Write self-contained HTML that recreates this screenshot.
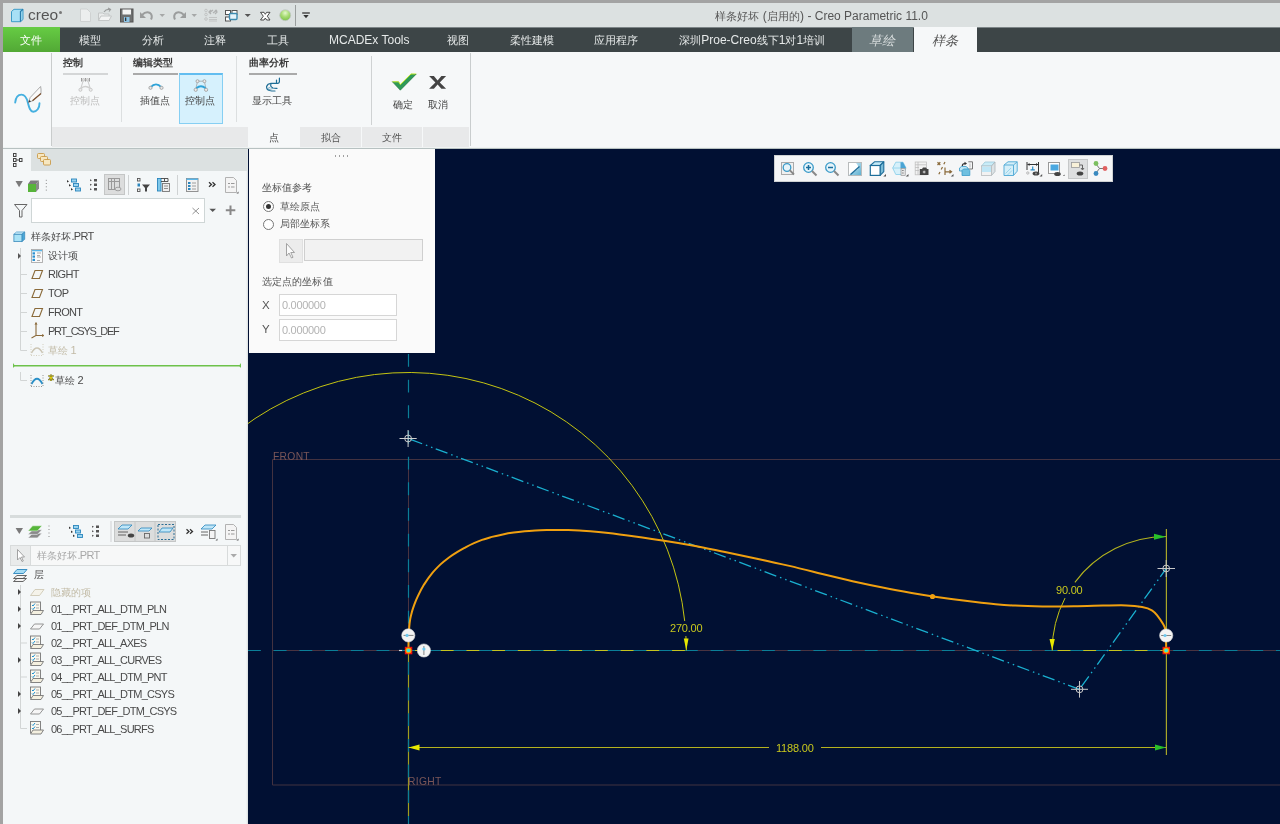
<!DOCTYPE html>
<html><head><meta charset="utf-8">
<style>
*{margin:0;padding:0;box-sizing:border-box}
html,body{width:1280px;height:824px;overflow:hidden;background:#a3a3a3;font-family:"Liberation Sans",sans-serif;font-size:11px;color:#333}
.a{position:absolute}
.t{position:absolute;white-space:nowrap;line-height:1;will-change:transform}
svg{position:absolute;overflow:visible}
#title{left:3px;top:3px;width:1277px;height:24px;background:#dce1e1}
#menu{left:3px;top:27px;width:1277px;height:25px;background:#3d4547}
#ribbon{left:3px;top:52px;width:1277px;height:96px;background:#f6f8f9}
#left{left:3px;top:148px;width:245px;height:676px;background:#f4f7f8}
#canvas{left:248px;top:148px;width:1032px;height:676px;background:#011033;overflow:hidden}
.mt{color:#e6e9e9;font-size:12px;top:34px}
.rl{font-size:11px;color:#3a3a3a;top:57px;font-weight:bold}
.bar{position:absolute;height:2px;top:73px;background:#aaaaaa}
.sep{position:absolute;width:1px;background:#dcdfe0}
.bt{font-size:11px;color:#444;top:95px}
.lt{font-size:11px;color:#4a4a4a;letter-spacing:-0.7px}
.ct{font-size:11px;color:#c8c81e;letter-spacing:-0.2px}
.pt{font-size:11px;color:#555}
.c{font-size:10px;letter-spacing:0.1px}
.mt .c,.ttl .c{font-size:11px}
.tab2{position:absolute;top:127px;height:20px;background:#e8e9ea}
</style></head><body>
<!-- title bar -->
<div id="title" class="a"></div>
<svg style="left:0;top:0" width="320" height="27">
 <!-- creo cube -->
 <path d="M11.5 11.5 L14 9.3 H23 V19.5 L20.5 21.7 H11.5 Z" fill="#a8e0f5" stroke="#3c9cc8" stroke-width="1"/>
 <path d="M20.5 21.7 V11.5 L23 9.3" fill="none" stroke="#2b7fae" stroke-width="1.3"/>
 <!-- new doc -->
 <path d="M80.5 9 H87 L90.5 12.5 V21.5 H80.5 Z" fill="#eceeee" stroke="#cfd2d2"/>
 <!-- open -->
 <path d="M98.5 13 H103 L104 14 H109 V20.5 H98.5 Z" fill="#e9ebeb" stroke="#c4c7c7"/>
 <path d="M98.5 20.5 L101 16 H111.5 L109 20.5 Z" fill="#f3f4f4" stroke="#c4c7c7"/>
 <path d="M104 12 Q106 9 109.5 9.5 M108 8 L110.5 9.5 L109 11.5" fill="none" stroke="#9a9c9c" stroke-width="1.2"/>
 <!-- save -->
 <rect x="120.5" y="9" width="12.5" height="13" fill="#6e7070" stroke="#555"/>
 <rect x="122.5" y="9.5" width="8.5" height="5" fill="#f4f4f4"/>
 <rect x="124" y="17" width="5.5" height="5" fill="#8cc4e6"/>
 <rect x="125" y="17.5" width="1.3" height="3.5" fill="#333"/>
 <!-- undo -->
 <path d="M142 15 Q146 11 150 13 Q153 15.5 151 19.5" fill="none" stroke="#9b9d9d" stroke-width="2"/>
 <path d="M140 12 V18 H146 Z" fill="#9b9d9d"/>
 <path d="M159.5 14 H165 L162.2 17 Z" fill="#a6a8a8"/>
 <!-- redo -->
 <path d="M184 15 Q180 11 176 13 Q173 15.5 175 19.5" fill="none" stroke="#9b9d9d" stroke-width="2"/>
 <path d="M186 12 V18 H180 Z" fill="#9b9d9d"/>
 <path d="M191.5 14 H197 L194.2 17 Z" fill="#a6a8a8"/>
 <!-- regen -->
 <g fill="none" stroke="#c2c4c4" stroke-width="1"><circle cx="206" cy="10.5" r="1.3"/><circle cx="206" cy="14.5" r="1.3"/><circle cx="206" cy="19" r="1.3"/></g>
 <path d="M209 17.5 H217 M209 19.5 H217 M209 21 H217" stroke="#c2c4c4" stroke-width="1"/>
 <path d="M209 13 L213 10 M213 13 L217 10 M211 10 L209 12 L211 14 M215 10 L217 12 L215 14" stroke="#b0b2b2" stroke-width="1.3" fill="none"/>
 <!-- windows -->
 <rect x="225.5" y="10.5" width="5" height="4" fill="#fff" stroke="#555" stroke-width="1"/>
 <rect x="232" y="10.5" width="5" height="4" fill="#fff" stroke="#555" stroke-width="1"/>
 <rect x="225.5" y="17" width="5" height="4" fill="#fff" stroke="#555" stroke-width="1"/>
 <rect x="229.5" y="13.5" width="7.5" height="6" rx="1" fill="#e6f3fa" stroke="#3d8bb0" stroke-width="1.4"/>
 <path d="M244.7 14 H250.8 L247.7 17 Z" fill="#555"/>
 <!-- close -->
 <path d="M260.5 12.3 H264 L265.3 14.3 L266.6 12.3 H270 L267.3 16.2 L270 20 H266.6 L265.3 18 L264 20 H260.5 L263.3 16.2 Z" fill="#fff" stroke="#3a3a3a" stroke-width="0.9" stroke-linejoin="round"/>
 <!-- green ball -->
 <defs><radialGradient id="gb" cx="0.5" cy="0.3" r="0.7"><stop offset="0" stop-color="#e4f8cc"/><stop offset="0.5" stop-color="#a8dc74"/><stop offset="1" stop-color="#7cc248"/></radialGradient></defs>
 <circle cx="285.2" cy="15.2" r="5.5" fill="url(#gb)" stroke="#c2c6c6" stroke-width="0.8"/>
 <rect x="295" y="5" width="1" height="21" fill="#9a9e9e"/>
 <path d="M302.2 13 H309.8" stroke="#333" stroke-width="1.3"/>
 <path d="M303.3 15 H308.7 L306 18.2 Z" fill="#333"/>
</svg>
<div class="t" style="left:28px;top:7px;font-size:15.5px;color:#555;letter-spacing:0px">creo</div>
<div class="a" style="left:59px;top:11px;width:3px;height:3px;border-radius:50%;background:#777"></div>
<div class="t ttl" style="left:715px;top:10px;font-size:12px;color:#555"><span class="c">样条好坏</span> (<span class="c">启用的</span>) - Creo Parametric 11.0</div>

<!-- menu bar -->
<div id="menu" class="a"></div>
<div class="a" style="left:3px;top:27px;width:1277px;height:1px;background:#7d8587"></div>
<div class="a" style="left:3px;top:27px;width:57px;height:25px;background:linear-gradient(#66cc44,#52a835)"></div>
<div class="a" style="left:852px;top:27px;width:61px;height:25px;background:#6d7b7e"></div>
<div class="a" style="left:914px;top:27px;width:63px;height:25px;background:#f6f8f9"></div>
<div class="t mt" style="left:20px;color:#fff"><span class="c">文件</span></div>
<div class="t mt" style="left:79px"><span class="c">模型</span></div>
<div class="t mt" style="left:142px"><span class="c">分析</span></div>
<div class="t mt" style="left:204px"><span class="c">注释</span></div>
<div class="t mt" style="left:267px"><span class="c">工具</span></div>
<div class="t mt" style="left:329px">MCADEx Tools</div>
<div class="t mt" style="left:447px"><span class="c">视图</span></div>
<div class="t mt" style="left:510px"><span class="c">柔性建模</span></div>
<div class="t mt" style="left:594px"><span class="c">应用程序</span></div>
<div class="t mt" style="left:679px"><span class="c">深圳</span>Proe-Creo<span class="c">线下</span>1<span class="c">对</span>1<span class="c">培训</span></div>
<div class="t mt" style="left:869px;top:33.5px;font-style:italic;color:#d8dddd"><span class="c" style="font-size:13px">草绘</span></div>
<div class="t mt" style="left:932px;top:33.5px;font-style:italic;color:#555"><span class="c" style="font-size:13px">样条</span></div>

<!-- ribbon -->
<div id="ribbon" class="a"></div>
<div class="sep" style="left:51px;top:53px;height:93px;background:#c9cccc"></div>
<div class="tab2" style="left:52px;width:196px"></div>
<div class="tab2" style="left:248px;width:51px;background:#f6f8f9"></div>
<div class="tab2" style="left:300px;width:61px"></div>
<div class="tab2" style="left:362px;width:60px"></div>
<div class="tab2" style="left:423px;width:46px"></div>
<div class="sep" style="left:470px;top:53px;height:93px;background:#c9cdce"></div>
<div class="a" style="left:3px;top:147px;width:1277px;height:1px;background:#f0f3f3"></div>

<svg style="left:0;top:0" width="60" height="130">
 <path d="M15.2 102.5 C15.8 97 18.5 94.6 21.4 94.6 C25.5 94.6 27 99 27.9 102.7 C29 107 30 111.7 33.2 111.7 C37 111.7 39.5 108 39.5 103.2" fill="none" stroke="#45b0e0" stroke-width="1.9" stroke-linecap="round"/>
 <path d="M28.3 102.5 L30.2 97.5 L40.6 86.5 L41 89 V93.5 L32.5 100.8 Z" fill="#fafafa" stroke="#888" stroke-width="0.7"/>
 <path d="M32.5 100.8 L41 93.5" stroke="#7a5030" stroke-width="1.3"/>
 <path d="M28.3 102.5 L29.5 100 L31 101.5 Z" fill="#333"/>
</svg>

<div class="t rl" style="left:63px;color:#3f3f3f"><span class="c">控制</span></div>
<div class="bar" style="left:63px;width:45px;background:#d4d6d7"></div>
<div class="t bt" style="left:70px;color:#bcbcbc"><span class="c">控制点</span></div>
<svg style="left:0;top:0" width="1" height="1"></svg>
<div class="sep" style="left:121px;top:57px;height:65px"></div>

<div class="t rl" style="left:133px"><span class="c">编辑类型</span></div>
<div class="bar" style="left:133px;width:45px"></div>
<div class="t bt" style="left:140px"><span class="c">插值点</span></div>
<div class="a" style="left:179px;top:73px;width:44px;height:51px;background:#d6f1fd;border:1px solid #86cff3;border-top:2px solid #62bdf0"></div>
<div class="t bt" style="left:185px"><span class="c">控制点</span></div>

<div class="sep" style="left:236px;top:56px;height:66px"></div>
<div class="t rl" style="left:249px"><span class="c">曲率分析</span></div>
<div class="bar" style="left:249px;width:48px"></div>
<div class="t bt" style="left:252px"><span class="c">显示工具</span></div>

<div class="sep" style="left:371px;top:56px;height:69px;background:#cfd2d3"></div>
<div class="t bt" style="left:393px;top:99px"><span class="c">确定</span></div>
<div class="t bt" style="left:428px;top:99px"><span class="c">取消</span></div>
<div class="t" style="left:269px;top:132px;font-size:11px;color:#444"><span class="c">点</span></div>
<div class="t" style="left:321px;top:132px;font-size:11px;color:#555"><span class="c">拟合</span></div>
<div class="t" style="left:382px;top:132px;font-size:11px;color:#555"><span class="c">文件</span></div>

<!-- ribbon icons -->
<svg style="left:0;top:0" width="470" height="148">
 <!-- disabled control pts icon -->
 <g fill="none" stroke="#c4c4c4" stroke-width="0.9">
  <path d="M80.4 89.8 L83.4 80 H87.6 L90.7 89.8"/>
  <path d="M81.3 88.2 Q85.5 84.8 89.8 88.2" stroke-width="1.6" stroke="#cfcfcf"/>
  <circle cx="80.4" cy="89.8" r="1.5" fill="#eee"/><circle cx="90.7" cy="89.8" r="1.5" fill="#eee"/>
  <path d="M81.5 78 V81.5 M85.5 78 V81.5 M89.5 78 V81.5" stroke="#999" stroke-width="1"/>
  <circle cx="83.5" cy="79.8" r="1.3" fill="#ddd"/><circle cx="87.5" cy="79.8" r="1.3" fill="#ddd"/>
 </g>
 <!-- interp pts icon -->
 <path d="M150.5 87.3 Q156 81.5 161.5 87.3" fill="none" stroke="#2fa3d8" stroke-width="1.9"/>
 <circle cx="150.5" cy="87.8" r="1.6" fill="#e8e8e8" stroke="#999" stroke-width="0.8"/>
 <circle cx="161.5" cy="87.8" r="1.6" fill="#e8e8e8" stroke="#999" stroke-width="0.8"/>
 <!-- control pts icon -->
 <path d="M195.7 89.8 L197.5 81.2 H204.4 L206.1 89.8" fill="none" stroke="#9a9a9a" stroke-width="0.7"/>
 <path d="M196.3 88.2 Q201 84.4 205.6 88.2" fill="none" stroke="#2fa3d8" stroke-width="1.8"/>
 <g fill="#ececec" stroke="#999" stroke-width="0.8"><circle cx="195.7" cy="89.8" r="1.6"/><circle cx="206.1" cy="89.8" r="1.6"/><circle cx="197.5" cy="81.2" r="1.5"/><circle cx="204.4" cy="81.2" r="1.5"/></g>
 <!-- display tool icon -->
 <g fill="none" stroke="#1f6e96" stroke-width="1.2" stroke-linecap="round">
  <path d="M279.4 78.2 V81.8 Q279.2 83.3 277.5 83.4 H271 Q267.5 83.8 266.6 86.5 Q266.3 89.5 269.5 90.5 Q272 91.1 275 91"/>
  <path d="M276.5 80 V82.6"/>
  <path d="M271 83.8 Q269.8 86.8 273 88 Q275 88.4 277 88.3"/>
  <path d="M267.5 88.5 L270 87.5 M268.5 89.8 L272.5 88.6" stroke-width="0.8" stroke="#5a9ab8"/>
 </g>
 <!-- check -->
 <path d="M392.2 81.6 L398.6 81.6 L400.3 84.4 L411 73.8 L416.4 73.9 L400.3 90.2 Z" fill="#2f9a58"/>
 <path d="M392.4 81.8 L398.6 81.8 L400.3 84.6 L411 74 L416.2 74" fill="none" stroke="#c8ec20" stroke-width="0.9"/>
 <path d="M392.2 81.6 L400.3 90.2 L416.4 73.9" fill="none" stroke="#1d6e3a" stroke-width="0.6"/>
 <!-- cancel X -->
 <path d="M429.1 76 H433.9 L437.6 80.6 L441.4 76 H446.1 L439.8 82.4 L446.1 88.8 H441.4 L437.6 84.6 L433.9 88.8 H429.1 L435.4 82.4 Z" fill="#444"/>
</svg>

<!-- left panel -->
<div id="left" class="a"></div>

<div class="a" style="left:31px;top:149px;width:216px;height:22px;background:#dce1e1"></div>
<div class="a" style="left:246px;top:171px;width:1px;height:653px;background:#eef1f2"></div>
<div class="a" style="left:247px;top:149px;width:1px;height:675px;background:#dfe4e5"></div>
<div class="a" style="left:31px;top:198px;width:174px;height:25px;background:#fff;border:1px solid #cfd6d6"></div>
<svg style="left:0;top:0" width="248" height="824">
 <!-- tree tab icon -->
 <g fill="none" stroke="#444" stroke-width="1"><rect x="13.5" y="153.5" width="2.5" height="3"/><rect x="13.5" y="158.5" width="2.5" height="3"/><rect x="13.5" y="163.5" width="2.5" height="3"/><rect x="19.5" y="158.5" width="2.5" height="3"/><path d="M16 160 H19.5"/></g>
 <!-- folders tab icon -->
 <g fill="#f7e7c0" stroke="#c89a4a" stroke-width="0.9"><rect x="37.5" y="153.5" width="7" height="5" rx="1"/><rect x="40.5" y="156.5" width="7" height="5" rx="1"/><rect x="43.5" y="159.5" width="7" height="5.5" rx="1"/></g>
 <!-- toolbar 1 -->
 <path d="M15.5 181 H22.8 L19.1 187.3 Z" fill="#7a7a7a"/>
 <rect x="28" y="184" width="8" height="8" fill="#57b43a"/>
 <path d="M28 184 L30.5 180.5 H39 L36 184 Z" fill="#7c7c7c"/>
 <path d="M36 184 L39 180.5 V188.5 L36 192 Z" fill="#8a8a8a"/>
 <g fill="#8a8a8a"><rect x="45.8" y="179.8" width="1" height="1"/><rect x="45.8" y="183" width="1" height="1"/><rect x="45.8" y="186.3" width="1" height="1"/><rect x="45.8" y="189.6" width="1" height="1"/></g>
 <!-- expand tree -->
 <g fill="#9bd4f0" stroke="#2a86bd" stroke-width="0.9"><rect x="71.5" y="179" width="5" height="3"/><rect x="73.5" y="183.5" width="5" height="3"/><rect x="75.5" y="188" width="5" height="3"/></g>
 <path d="M67 180 L69 181.5 L67 182.5 Z M69 184 L71 185.5 L69 186.5Z M71 188 L73 189.5 L71 190.5Z" fill="#333"/>
 <!-- list expand -->
 <g fill="#555"><rect x="94" y="179" width="3" height="2.5"/><rect x="94" y="183.5" width="3" height="2.5"/><rect x="94" y="188" width="3" height="2.5"/><path d="M90 179.2 L92 180.2 L90 181.2Z M90 183.7 L92 184.7 L90 185.7Z M90 188.2 L92 189.2 L90 190.2Z"/></g>
 <!-- selected btn -->
 <rect x="104.5" y="174.5" width="20" height="20" fill="#dcdddd" stroke="#c4c6c6"/>
 <g fill="none" stroke="#9a9a9a" stroke-width="1"><rect x="108.5" y="178.5" width="11" height="11"/><path d="M111.5 178.5 V189.5 M114.5 178.5 V189.5 M108.5 181.5 H119.5"/></g>
 <ellipse cx="118" cy="189" rx="3" ry="1.8" fill="#dcdddd" stroke="#9a9a9a" stroke-width="0.9"/>
 <rect x="128" y="175" width="1" height="20" fill="#cfd2d3"/>
 <!-- tree filter -->
 <g fill="none" stroke="#555" stroke-width="0.9"><rect x="137.5" y="178.5" width="2.5" height="2.5"/><rect x="137.5" y="189" width="2.5" height="2.5"/></g>
 <rect x="137.5" y="183.5" width="2.5" height="3" fill="#2a86bd"/>
 <path d="M142 184.5 H150 L147 188 V191.5 H145 V188 Z" fill="#444"/>
 <!-- table icon -->
 <rect x="157.5" y="178.5" width="3.5" height="12.5" fill="#7fc8ea" stroke="#2a86bd" stroke-width="0.9"/>
 <path d="M161 178.5 H168 V181.5 H161 M164.5 178.5 V181.5" fill="none" stroke="#444" stroke-width="0.9"/>
 <rect x="162.5" y="183.5" width="7" height="8" fill="#eee" stroke="#777" stroke-width="0.9"/>
 <path d="M164 186 H168 M164 188.5 H168" stroke="#777" stroke-width="0.8"/>
 <rect x="177" y="175" width="1" height="20" fill="#cfd2d3"/>
 <!-- list icon -->
 <rect x="186.5" y="178.5" width="11.5" height="13" fill="#f2f2f2" stroke="#888" stroke-width="0.9"/>
 <rect x="186.5" y="178.5" width="11.5" height="1.5" fill="#5ab6e8"/>
 <g fill="#2a86bd"><rect x="188" y="182" width="2.5" height="2"/><rect x="188" y="185" width="2.5" height="2"/><rect x="188" y="188" width="2.5" height="2"/></g>
 <path d="M192 183 H196 M192 186 H196 M192 189 H196" stroke="#888" stroke-width="0.8"/>
 <path d="M209 182.3 L211.5 184.5 L209 186.8 M212.5 182.3 L215 184.5 L212.5 186.8" fill="none" stroke="#333" stroke-width="1.3"/>
 <!-- doc icon -->
 <path d="M225.5 177.5 H233.5 L236.5 180.5 V192.5 H225.5 Z" fill="#f4f4f4" stroke="#aaa" stroke-width="0.9"/>
 <path d="M228 183.5 H230 M231 183.5 H234.5 M228 187 H230 M231 187 H234.5" stroke="#999" stroke-width="1"/>
 <path d="M236.5 193.5 L238.5 191.5 V193.5Z" fill="#555"/>
 <!-- funnel -->
 <path d="M14.5 204.5 H27 L22 210.5 V217 H19.5 V210.5 Z" fill="none" stroke="#666" stroke-width="1"/>
 <!-- search clear x, dropdown, plus -->
 <path d="M192.5 208 L199 214 M199 208 L192.5 214" stroke="#888" stroke-width="0.9"/>
 <path d="M209.4 208.7 H216 L212.7 212 Z" fill="#555"/>
 <path d="M230.5 205.5 V215 M225.8 210.2 H235.3" stroke="#888" stroke-width="2"/>
 <!-- model icon -->
 <path d="M13.9 234.3 L16.5 232 H24.7 L21.9 234.3 Z" fill="#d4f2fc" stroke="#4a9ccc" stroke-width="0.8"/>
 <path d="M21.9 234.3 L24.7 232 V239.3 L21.9 241.6 Z" fill="#4aa8d8" stroke="#3c8cbc" stroke-width="0.8"/>
 <rect x="13.9" y="234.3" width="8" height="7.3" fill="#a8e2f6" stroke="#3c8cbc" stroke-width="0.8"/>
 <!-- tree lines -->
 <path d="M20.5 248 V350.5 H27 M20.5 274.5 H27 M20.5 293.5 H27 M20.5 312.5 H27 M20.5 331.5 H27" fill="none" stroke="#d2d5d5" stroke-width="1"/>
 <path d="M20.5 372 V380.5 H27" fill="none" stroke="#d2d5d5" stroke-width="1"/>
 <path d="M18 253 L21 256 L18 259 Z" fill="#555"/>
 <!-- design items icon -->
 <rect x="31.5" y="249.5" width="11" height="13" fill="#fafafa" stroke="#aaa" stroke-width="0.9"/>
 <rect x="32" y="250" width="10" height="1.3" fill="#5ab6e8"/>
 <g fill="#2a90d0"><rect x="32.5" y="252.3" width="2.5" height="2.2"/><rect x="32.5" y="255.5" width="2.5" height="2.2"/><rect x="32.5" y="258.8" width="2.5" height="2.2"/></g>
 <path d="M37 253 H41 M37 255.5 H40 M37 257 H41 M37 260.5 H40" stroke="#888" stroke-width="0.7"/>
 <!-- datum planes -->
 <g fill="none" stroke="#8a6a3a" stroke-width="1.1"><path d="M32 278.5 L35 270.5 H42.5 L39.5 278.5 Z"/><path d="M32 297.5 L35 289.5 H42.5 L39.5 297.5 Z"/><path d="M32 316.5 L35 308.5 H42.5 L39.5 316.5 Z"/></g>
 <!-- csys -->
 <path d="M36 323.5 V335.5 L31.5 338 M36 335.5 H43" fill="none" stroke="#8a6a3a" stroke-width="1.1"/>
 <path d="M35 324.5 L36 322.5 L37 324.5 M42 334.5 L44 335.5 L42 336.5" fill="#8a6a3a" stroke="#8a6a3a" stroke-width="0.8"/>
 <!-- sketch1 icon disabled -->
 <path d="M31.5 353 Q37 343 42.5 353" fill="none" stroke="#cbc5b4" stroke-width="1.5"/>
 <path d="M31 355.5 H43 M31 344 V355 M43 344 V355" stroke="#cfc9b9" stroke-width="0.9" stroke-dasharray="1 1.5"/>
 <!-- green line -->
 <rect x="13" y="365" width="228" height="1.5" fill="#6dc24b"/>
 <path d="M13 363 V368 L15 365.7Z M241 363 V368 L239 365.7Z" fill="#6dc24b"/>
 <!-- sketch2 icon -->
 <path d="M31.5 384 Q37 373.5 42.5 384" fill="none" stroke="#2a90c8" stroke-width="1.8"/>
 <path d="M31 386.5 H43 M31 375 V386 M43 375 V386" stroke="#888" stroke-width="0.9" stroke-dasharray="1 1.5"/>
 <path d="M48.5 380 L53.5 375.5 M48.5 375.5 L53.5 380 M51 374.5 V381" stroke="#444" stroke-width="1.6"/>
 <path d="M48.5 380 L53.5 375.5 M48.5 375.5 L53.5 380 M51 374.5 V381" stroke="#f0e000" stroke-width="0.9"/>
 <!-- divider -->
 <rect x="10" y="515" width="231" height="3" fill="#d7dcdc"/>
 <!-- toolbar 2 -->
 <path d="M15.6 528 H23 L19.3 534 Z" fill="#7a7a7a"/>
 <path d="M28 537.9 L32.6 533.2 H42 L37.4 537.9 Z" fill="#8a8a8a" stroke="#f4f7f8" stroke-width="0.6"/>
 <path d="M28 534.4 L32.6 529.7 H42 L37.4 534.4 Z" fill="#8a8a8a" stroke="#f4f7f8" stroke-width="0.6"/>
 <path d="M28 530.9 L32.6 525.8 H42 L37.4 530.9 Z" fill="#56b63a" stroke="#f4f7f8" stroke-width="0.5"/>
 <g fill="#8a8a8a"><rect x="48.5" y="525.5" width="1" height="1"/><rect x="48.5" y="529" width="1" height="1"/><rect x="48.5" y="532.5" width="1" height="1"/><rect x="48.5" y="536" width="1" height="1"/></g>
 <g fill="#9bd4f0" stroke="#2a86bd" stroke-width="0.9"><rect x="73.5" y="525.5" width="5" height="3"/><rect x="75.5" y="530" width="5" height="3"/><rect x="77.5" y="534.5" width="5" height="3"/></g>
 <path d="M69 526.5 L71 528 L69 529 Z M71 530.5 L73 532 L71 533Z M73 534.5 L75 536 L73 537Z" fill="#333"/>
 <g fill="#555"><rect x="96" y="525.5" width="3" height="2.5"/><rect x="96" y="530" width="3" height="2.5"/><rect x="96" y="534.5" width="3" height="2.5"/><path d="M92 525.7 L94 526.7 L92 527.7Z M92 530.2 L94 531.2 L92 532.2Z M92 534.7 L94 535.7 L92 536.7Z"/></g>
 <rect x="110.5" y="521" width="1" height="21" fill="#cfd2d3"/>
 <rect x="114.5" y="521.5" width="61" height="20" fill="#dcdddd" stroke="#c4c6c6"/>
 <path d="M135 521.5 V541.5 M155 521.5 V541.5" stroke="#c4c6c6"/>
 <!-- layer btn icons -->
 <path d="M118 529 L122 525 H132 L128 529 Z" fill="#bfe6f8" stroke="#2a86bd" stroke-width="0.8"/>
 <path d="M118 532 H128 M118 535 H126" stroke="#555" stroke-width="0.9"/>
 <ellipse cx="131" cy="535.5" rx="3.2" ry="2" fill="#444"/>
 <path d="M138 531 L141 528 H152 L149 531 Z" fill="#bfe6f8" stroke="#2a86bd" stroke-width="0.8"/>
 <rect x="144.5" y="533.5" width="5" height="4.5" fill="none" stroke="#666" stroke-width="0.9"/>
 <path d="M159 532 L162 528 H173 L170 532 Z" fill="#bfe6f8" stroke="#2a86bd" stroke-width="0.8"/>
 <rect x="158" y="524.5" width="16" height="15" fill="none" stroke="#2a6d94" stroke-width="1" stroke-dasharray="2 1.5"/>
 <path d="M186.5 529.3 L189 531.5 L186.5 533.8 M190 529.3 L192.5 531.5 L190 533.8" fill="none" stroke="#333" stroke-width="1.3"/>
 <path d="M201 529 L205 525 H216 L212 529 Z" fill="#bfe6f8" stroke="#2a86bd" stroke-width="0.8"/>
 <path d="M201 532 H208 M201 535 H208" stroke="#555" stroke-width="0.9"/>
 <rect x="209.5" y="530.5" width="5.5" height="8" fill="#f4f4f4" stroke="#777" stroke-width="0.9"/>
 <path d="M215.5 540.5 L217.5 538.5 V540.5Z" fill="#555"/>
 <path d="M225.5 524.5 H233.5 L236.5 527.5 V539.5 H225.5 Z" fill="#f4f4f4" stroke="#aaa" stroke-width="0.9"/>
 <path d="M228 530.5 H230 M231 530.5 H234.5 M228 534 H230 M231 534 H234.5" stroke="#999" stroke-width="1"/>
 <path d="M236.5 540.5 L238.5 538.5 V540.5Z" fill="#555"/>
 <!-- layer dropdown -->
 <rect x="10.5" y="545.5" width="230" height="20" fill="#f7f8f8" stroke="#d8dbdb"/>
 <rect x="11" y="546" width="19.5" height="19" fill="#e9ebeb"/>
 <path d="M30.5 546 V565" stroke="#d8dbdb"/>
 <path d="M227.5 546 V565" stroke="#d8dbdb"/>
 <path d="M17.5 549.5 V560 L20 557.5 L22 561.5 L23.3 561 L21.5 557 H24.5 Z" fill="#fff" stroke="#999" stroke-width="0.9"/>
 <path d="M230.5 554 H237 L233.7 557.5 Z" fill="#aaa"/>
 <!-- layers icon -->
 <path d="M13.5 578.5 L17 575.5 H26.5 L23 578.5 Z M13.5 581.5 L17 578.5 H26.5 L23 581.5 Z" fill="#f4f4f4" stroke="#555" stroke-width="0.9"/>
 <path d="M13.5 573.5 L17 569.5 H27 L23.5 573.5 Z" fill="#a6dcf4" stroke="#2a86bd" stroke-width="0.9"/>
 <!-- layer tree lines -->
 <path d="M20.5 585 V728.5 H27 M20.5 643 H27 M20.5 677 H27" fill="none" stroke="#d2d5d5" stroke-width="1"/>
 <g fill="#444"><path d="M18 589 L21 592 L18 595Z"/><path d="M18 606 L21 609 L18 612Z"/><path d="M18 623 L21 626 L18 629Z"/><path d="M18 657 L21 660 L18 663Z"/><path d="M18 691 L21 694 L18 697Z"/><path d="M18 708 L21 711 L18 714Z"/></g>
 <!-- hidden items plane -->
 <path d="M30.5 595.5 L35 589.5 H44 L39.5 595.5 Z" fill="#f5f3ea" stroke="#cfc9b6" stroke-width="0.9"/>
</svg>
<div class="t lt" style="left:31px;top:231px"><span class="c">样条好坏</span>.PRT</div>
<div class="t lt" style="left:48px;top:250px"><span class="c">设计项</span></div>
<div class="t lt" style="left:48px;top:269px">RIGHT</div>
<div class="t lt" style="left:48px;top:288px">TOP</div>
<div class="t lt" style="left:48px;top:307px">FRONT</div>
<div class="t lt" style="left:48px;top:326px;letter-spacing:-1.3px">PRT_CSYS_DEF</div>
<div class="t lt" style="left:48px;top:345px;color:#c2bba6"><span class="c">草绘</span> 1</div>
<div class="t lt" style="left:55px;top:375px"><span class="c">草绘</span> 2</div>
<div class="t lt" style="left:37px;top:550px;color:#a8a8a8"><span class="c">样条好坏</span>.PRT</div>
<div class="t lt" style="left:34px;top:569px"><span class="c">层</span></div>
<div class="t lt" style="left:51px;top:587px;color:#c2bba6"><span class="c">隐藏的项</span></div>
<div class="t lt" style="left:51px;top:604.0px;letter-spacing:-0.75px">01__PRT_ALL_DTM_PLN</div>
<div class="t lt" style="left:51px;top:621.0px;letter-spacing:-0.75px">01__PRT_DEF_DTM_PLN</div>
<div class="t lt" style="left:51px;top:638.0px;letter-spacing:-0.75px">02__PRT_ALL_AXES</div>
<div class="t lt" style="left:51px;top:655.0px;letter-spacing:-0.75px">03__PRT_ALL_CURVES</div>
<div class="t lt" style="left:51px;top:672.0px;letter-spacing:-0.75px">04__PRT_ALL_DTM_PNT</div>
<div class="t lt" style="left:51px;top:689.0px;letter-spacing:-0.75px">05__PRT_ALL_DTM_CSYS</div>
<div class="t lt" style="left:51px;top:706.0px;letter-spacing:-0.75px">05__PRT_DEF_DTM_CSYS</div>
<div class="t lt" style="left:51px;top:723.5px;letter-spacing:-0.75px">06__PRT_ALL_SURFS</div>
<svg style="left:0;top:0" width="248" height="824"><rect x="30.5" y="602.0" width="10" height="11" fill="#fbf8ee" stroke="#777" stroke-width="0.9"/><path d="M30.5 614.5 L33 610.5 H43.5 L41 614.5 Z" fill="#f4f0e0" stroke="#777" stroke-width="0.9"/><path d="M32 605.0 L33 606.0 L35 603.5 M32 608.5 L33 609.5 L35 607.0" fill="none" stroke="#1d8fd0" stroke-width="1"/><path d="M36 605.0 H39 M36 608.0 H39" stroke="#999" stroke-width="0.8"/>
<path d="M30.5 629.0 L34.5 624.0 H43.5 L39.5 629.0 Z" fill="#f6f6f6" stroke="#8a8a8a" stroke-width="0.9"/>
<rect x="30.5" y="636.0" width="10" height="11" fill="#fbf8ee" stroke="#777" stroke-width="0.9"/><path d="M30.5 648.5 L33 644.5 H43.5 L41 648.5 Z" fill="#f4f0e0" stroke="#777" stroke-width="0.9"/><path d="M32 639.0 L33 640.0 L35 637.5 M32 642.5 L33 643.5 L35 641.0" fill="none" stroke="#1d8fd0" stroke-width="1"/><path d="M36 639.0 H39 M36 642.0 H39" stroke="#999" stroke-width="0.8"/>
<rect x="30.5" y="653.0" width="10" height="11" fill="#fbf8ee" stroke="#777" stroke-width="0.9"/><path d="M30.5 665.5 L33 661.5 H43.5 L41 665.5 Z" fill="#f4f0e0" stroke="#777" stroke-width="0.9"/><path d="M32 656.0 L33 657.0 L35 654.5 M32 659.5 L33 660.5 L35 658.0" fill="none" stroke="#1d8fd0" stroke-width="1"/><path d="M36 656.0 H39 M36 659.0 H39" stroke="#999" stroke-width="0.8"/>
<rect x="30.5" y="670.0" width="10" height="11" fill="#fbf8ee" stroke="#777" stroke-width="0.9"/><path d="M30.5 682.5 L33 678.5 H43.5 L41 682.5 Z" fill="#f4f0e0" stroke="#777" stroke-width="0.9"/><path d="M32 673.0 L33 674.0 L35 671.5 M32 676.5 L33 677.5 L35 675.0" fill="none" stroke="#1d8fd0" stroke-width="1"/><path d="M36 673.0 H39 M36 676.0 H39" stroke="#999" stroke-width="0.8"/>
<rect x="30.5" y="687.0" width="10" height="11" fill="#fbf8ee" stroke="#777" stroke-width="0.9"/><path d="M30.5 699.5 L33 695.5 H43.5 L41 699.5 Z" fill="#f4f0e0" stroke="#777" stroke-width="0.9"/><path d="M32 690.0 L33 691.0 L35 688.5 M32 693.5 L33 694.5 L35 692.0" fill="none" stroke="#1d8fd0" stroke-width="1"/><path d="M36 690.0 H39 M36 693.0 H39" stroke="#999" stroke-width="0.8"/>
<path d="M30.5 714.0 L34.5 709.0 H43.5 L39.5 714.0 Z" fill="#f6f6f6" stroke="#8a8a8a" stroke-width="0.9"/>
<rect x="30.5" y="721.5" width="10" height="11" fill="#fbf8ee" stroke="#777" stroke-width="0.9"/><path d="M30.5 734.0 L33 730.0 H43.5 L41 734.0 Z" fill="#f4f0e0" stroke="#777" stroke-width="0.9"/><path d="M32 724.5 L33 725.5 L35 723.0 M32 728.0 L33 729.0 L35 726.5" fill="none" stroke="#1d8fd0" stroke-width="1"/><path d="M36 724.5 H39 M36 727.5 H39" stroke="#999" stroke-width="0.8"/>
</svg>

<!-- canvas -->
<div id="canvas" class="a"></div>
<svg style="left:248px;top:148px" width="1032" height="676" viewBox="248 148 1032 676">
 <defs><clipPath id="cc"><rect x="248" y="148" width="1032" height="676"/></clipPath></defs>
 <g clip-path="url(#cc)" fill="none">
 <!-- FRONT datum rectangle + plane edges -->
 <path d="M1290 459.5 H272.5 V785 H1290" stroke="#433240" stroke-width="1"/>
 <path d="M272.5 650.5 H1290" stroke="#4a3340" stroke-width="1"/>
 <path d="M408.5 459.5 V785" stroke="#4a3340" stroke-width="1"/>
 <!-- yellow extension lines -->
 <path d="M408.3 650.5 H686.3 M1052.2 650.5 H1166.2" stroke="#c6c31e" stroke-width="1.2"/>
 <path d="M408.5 650.5 V816" stroke="#a29e1e" stroke-width="1.2"/>
 <path d="M399 650.5 H402.5" stroke="#e0e0e0" stroke-width="1.2"/>
 <path d="M1166.4 529 V755" stroke="#a8a628" stroke-width="1.2"/>
 <!-- centerlines -->
 <path d="M248 650.5 H1290" stroke="#0b7f98" stroke-width="1.2" stroke-dasharray="12.85 12.85"/>
 <path d="M408.5 123.1 V830" stroke="#0b7f98" stroke-width="1.2" stroke-dasharray="12.83 12.83"/>
 <!-- big arc 270 -->
 <path d="M240.0 429.2 A278 278 0 0 1 684.7 621.0" stroke="#c4c412" stroke-width="1"/>
 <path d="M685.9 636.0 A278 278 0 0 1 686.3 650.5" stroke="#c4c412" stroke-width="1"/>
 <path d="M686.3 650.5 L683.8 638.5 L688.5 638.5 Z" fill="#e8e800" stroke="none"/>
 <!-- 90 arc -->
 <path d="M1166.2 536.5 A114 114 0 0 0 1074.9 582.3" stroke="#b4b41e" stroke-width="1.1"/>
 <path d="M1065.0 598.1 A114 114 0 0 0 1052.2 650.5" stroke="#c4c412" stroke-width="1"/>
 <path d="M1052.2 650.5 L1049.5 639 L1054.8 639 Z" fill="#e8e800" stroke="none"/>
 <path d="M1166 536.8 L1154 533.8 L1154 539.8 Z" fill="#28c02a" stroke="none"/>
 <!-- 1188 dim -->
 <path d="M408.5 747.5 H769 M821 747.5 H1166" stroke="#b5b21e" stroke-width="1.2"/>
 <path d="M408.5 747.5 L419.5 744.5 V750.5 Z" fill="#e8e800" stroke="none"/>
 <path d="M1166 747.5 L1155 744.5 V750.5 Z" fill="#28c02a" stroke="none"/>
 <!-- control polygon -->
 <path d="M408.1 438.5 L1079.5 689.3" stroke="#1ab0d0" stroke-width="1.3" stroke-dasharray="12.5 4 1.5 4 1.5 3.5" stroke-dashoffset="24.5"/>
 <path d="M1079.5 689.3 L1166.2 568.5" stroke="#1ab0d0" stroke-width="1.3" stroke-dasharray="12.5 4 1.5 4 1.5 3.5" stroke-dashoffset="23.5"/>
 <!-- spline -->
 <path d="M408.4 650.5 C408.4 648.8 408.5 644.0 408.6 640.0 C408.8 636.0 409.0 629.9 409.3 626.4 C409.6 622.9 409.8 621.5 410.2 619.1 C410.6 616.7 411.3 614.3 411.9 611.9 C412.6 609.5 413.3 607.3 414.3 604.6 C415.3 601.9 416.4 599.2 418.0 595.9 C419.6 592.6 421.7 588.4 424.0 584.6 C426.4 580.9 429.3 576.7 432.0 573.4 C434.7 570.0 437.7 567.1 440.5 564.4 C443.3 561.8 446.2 559.6 449.0 557.5 C451.8 555.4 454.7 553.6 457.5 551.9 C460.3 550.2 463.3 548.6 466.0 547.1 C468.7 545.6 471.3 544.3 474.0 543.1 C476.7 541.9 479.1 540.9 482.0 539.9 C485.0 538.8 488.4 537.9 491.9 536.9 C495.3 536.0 499.2 535.1 502.8 534.4 C506.4 533.7 510.1 533.1 513.7 532.6 C517.4 532.1 521.0 531.7 524.7 531.3 C528.3 530.9 532.0 530.7 535.6 530.5 C539.3 530.2 542.9 530.1 546.6 530.0 C550.2 529.9 553.9 529.9 557.5 529.9 C561.1 529.9 564.8 530.0 568.4 530.1 C572.1 530.2 575.7 530.4 579.4 530.5 C583.0 530.7 585.9 530.9 590.3 531.2 C594.7 531.6 599.1 532.0 606.0 532.8 C612.9 533.6 622.1 534.7 631.5 536.0 C641.0 537.3 652.1 538.8 662.5 540.5 C672.9 542.1 683.3 543.8 693.8 545.7 C704.2 547.6 714.5 549.8 725.0 551.9 C735.5 554.1 746.1 556.3 756.9 558.7 C767.6 561.0 778.6 563.4 789.4 565.9 C800.1 568.4 810.7 571.1 821.2 573.7 C831.8 576.2 842.1 578.8 852.5 581.2 C862.9 583.5 873.9 585.8 883.8 587.7 C893.6 589.7 903.6 591.5 911.6 592.9 C919.5 594.3 924.9 595.2 931.6 596.2 C938.2 597.2 943.9 598.0 951.2 599.0 C958.6 600.0 968.1 601.2 975.5 602.1 C982.9 603.0 989.0 603.7 995.6 604.3 C1002.2 604.9 1007.3 605.3 1015.1 605.6 C1023.0 606.0 1032.7 606.3 1042.5 606.5 C1052.3 606.6 1063.7 606.5 1073.8 606.3 C1083.8 606.2 1094.3 605.8 1103.0 605.6 C1111.8 605.4 1119.9 605.2 1126.5 605.4 C1133.0 605.6 1137.8 606.2 1142.1 607.0 C1146.3 607.8 1149.2 608.7 1151.9 610.3 C1154.6 611.9 1156.3 614.4 1158.1 616.6 C1159.9 618.8 1161.6 621.5 1162.8 623.6 C1164.0 625.7 1164.7 626.3 1165.2 629.0 C1165.7 631.7 1165.8 636.4 1166.0 640.0 C1166.2 643.6 1166.2 648.8 1166.2 650.5" stroke="#f0a010" stroke-width="2"/>
 <circle cx="932.5" cy="596.5" r="2.6" fill="#f0a010" stroke="none"/>
 </g>
 <!-- control point markers -->
 <g stroke="#c8c8c8" stroke-width="1" fill="none">
  <circle cx="408.1" cy="438.5" r="3.4"/><path d="M399.5 438.5 H416.7 M408.1 430 V447" stroke="#d0d0d0"/>
  <circle cx="1079.5" cy="689.3" r="3.4"/><path d="M1071 689.3 H1088 M1079.5 681 V697.6"/>
  <circle cx="1166.2" cy="568.5" r="3.4"/><path d="M1157.5 568.5 H1175 M1166.2 560 V577"/>
 </g>
 <!-- end markers -->
 <rect x="404.8" y="646.8" width="7.5" height="7.5" fill="#f01010"/>
 <circle cx="408.5" cy="650.5" r="3" fill="#f5a800"/><circle cx="408.5" cy="650.5" r="1.8" fill="#30e8e8"/>
 <rect x="1162.5" y="646.8" width="7.5" height="7.5" fill="#f01010"/>
 <circle cx="1166.2" cy="650.5" r="3" fill="#f5a800"/><circle cx="1166.2" cy="650.5" r="1.8" fill="#30e8e8"/>
 <g fill="#f3f3f3" stroke="#d8d8d8" stroke-width="0.6">
  <circle cx="408.3" cy="635.4" r="6.6"/><circle cx="423.9" cy="650.5" r="6.6"/><circle cx="1166.2" cy="635.5" r="6.6"/>
 </g>
 <g stroke="#777" stroke-width="0.9"><path d="M403.5 635.4 H413.5 M1161.2 635.5 H1171.2 M423.9 646 V655"/></g>
 <g fill="#6cc8ee"><circle cx="407" cy="635.4" r="1.6"/><circle cx="1165" cy="635.5" r="1.6"/><circle cx="423.9" cy="649" r="1.6"/></g>
</svg>
<div class="t ct" style="left:272.5px;top:451.5px;color:#7a5658;font-size:10.3px;letter-spacing:0.3px">FRONT</div>
<div class="t ct" style="left:408px;top:777px;color:#7a5658;font-size:10.3px;letter-spacing:0.3px">RIGHT</div>
<div class="t ct" style="left:669.5px;top:622.5px">270.00</div>
<div class="t ct" style="left:1055.5px;top:585px">90.00</div>
<div class="t ct" style="left:776px;top:742.5px">1188.00</div>

<!-- floating point panel -->
<div class="a" style="left:249px;top:149px;width:186px;height:204px;background:#fafafa"></div>
<div class="a" style="left:335px;top:155px;width:15px;height:2px;background:repeating-linear-gradient(90deg,#a0a0a0 0 1.5px,transparent 1.5px 4px)"></div>
<div class="t pt" style="left:262px;top:182px"><span class="c">坐标值参考</span></div>
<div class="a" style="left:263px;top:201px;width:11px;height:11px;border-radius:50%;border:1px solid #777;background:#fff"></div>
<div class="a" style="left:266px;top:204px;width:5px;height:5px;border-radius:50%;background:#333"></div>
<div class="t pt" style="left:280px;top:200.5px"><span class="c">草绘原点</span></div>
<div class="a" style="left:263px;top:219px;width:11px;height:11px;border-radius:50%;border:1px solid #777;background:#fff"></div>
<div class="t pt" style="left:280px;top:218px"><span class="c">局部坐标系</span></div>
<div class="a" style="left:279px;top:239px;width:24px;height:24px;background:#ececec;border:1px solid #e0e0e0"></div>
<svg style="left:0;top:0" width="440" height="360"><path d="M286.5 243.5 V256 L289 253 L291.5 258 L293 257.3 L290.8 252.5 H294.5 Z" fill="#fafafa" stroke="#9a9a9a" stroke-width="0.9"/></svg>
<div class="a" style="left:304px;top:239px;width:119px;height:22px;background:#f2f2f2;border:1px solid #cfcfcf"></div>
<div class="t pt" style="left:262px;top:276px"><span class="c">选定点的坐标值</span></div>
<div class="t pt" style="left:262px;top:300px;font-size:11.5px">X</div>
<div class="t pt" style="left:262px;top:324px;font-size:11.5px">Y</div>
<div class="a" style="left:279px;top:294px;width:118px;height:22px;background:#fff;border:1px solid #d6d6d6"></div>
<div class="a" style="left:279px;top:319px;width:118px;height:22px;background:#fff;border:1px solid #d6d6d6"></div>
<div class="t" style="left:282px;top:300px;font-size:11px;color:#b3b3b3;letter-spacing:-0.3px">0.000000</div>
<div class="t" style="left:282px;top:325px;font-size:11px;color:#b3b3b3;letter-spacing:-0.3px">0.000000</div>

<!-- view toolbar -->
<div class="a" style="left:774px;top:155px;width:339px;height:27px;background:#f5f6f7;border:1px solid #cfd2d3"></div>
<div class="a" style="left:1068px;top:159px;width:19.5px;height:19.5px;background:#dedfe0;border:1px solid #c6c8c9"></div>
<svg style="left:0;top:0" width="1120" height="190">
 <!-- zoom fit -->
 <rect x="781.5" y="162.5" width="12" height="12" fill="#f0f0f0" stroke="#aaa"/>
 <circle cx="787" cy="167.5" r="3.8" fill="#e6f4fa" stroke="#3a9ac8" stroke-width="1.3"/>
 <path d="M789.7 170.2 L794 174.5" stroke="#888" stroke-width="1.8"/>
 <!-- zoom in -->
 <circle cx="808.5" cy="167.5" r="4.8" fill="#e6f4fa" stroke="#3a9ac8" stroke-width="1.3"/>
 <path d="M806 167.5 H811 M808.5 165 V170" stroke="#1a6d9c" stroke-width="1.5"/>
 <path d="M812 171 L816.5 175.5" stroke="#888" stroke-width="2"/>
 <!-- zoom out -->
 <circle cx="830.5" cy="167.5" r="4.8" fill="#e6f4fa" stroke="#3a9ac8" stroke-width="1.3"/>
 <path d="M828 167.5 H833" stroke="#1a6d9c" stroke-width="1.5"/>
 <path d="M834 171 L838.5 175.5" stroke="#888" stroke-width="2"/>
 <!-- repaint -->
 <defs><linearGradient id="rp" x1="0" y1="0" x2="1" y2="1"><stop offset="0" stop-color="#d8f0fa"/><stop offset="1" stop-color="#5aaed0"/></linearGradient></defs>
 <rect x="848.5" y="162.5" width="13" height="13" fill="url(#rp)" stroke="#b8bbbc"/>
 <path d="M849 163 H856 Q859 166 858 169 L849 175 Z" fill="#fff"/>
 <path d="M850.5 174.5 L859.5 166.5" stroke="#1e6e9a" stroke-width="1.3"/>
 <!-- cube -->
 <path d="M870.3 165.5 L874.5 161.8 H883.8 L880.1 165.5 Z" fill="#c4eaf7" stroke="#1e6e9a" stroke-width="1.1" stroke-linejoin="round"/>
 <path d="M880.1 165.5 L883.8 161.8 V171.6 L880.1 175.4 Z" fill="#7cbdd8" stroke="#1e6e9a" stroke-width="1.1" stroke-linejoin="round"/>
 <rect x="870.3" y="165.5" width="9.8" height="9.9" fill="#fff" stroke="#1e6e9a" stroke-width="1.2"/>
 <path d="M883.3 176.5 L886 174 V176.5 Z" fill="#555"/>
 <!-- named view -->
 <path d="M892.7 168 L895.8 162.2 H903 L906 168 L903 174.5 H895.8 Z" fill="#d6f0fa" stroke="#8fd0ea" stroke-width="0.9"/>
 <path d="M892.7 168 H906" stroke="#8fd0ea" stroke-width="0.8"/>
 <path d="M900.5 162.2 L903 162.2 L906 168 H900.5 Z" fill="#4aa4d4"/>
 <rect x="901" y="168.5" width="4.2" height="7" fill="#e6e6e6" stroke="#888" stroke-width="0.6"/>
 <path d="M902.3 170.5 H903.5 M902.3 173 H903.5" stroke="#444" stroke-width="0.8"/>
 <path d="M905.7 176.5 L908.5 174 V176.5 Z" fill="#555"/>
 <!-- camera -->
 <rect x="915.2" y="162" width="11.2" height="12.8" fill="#f2f2f2" stroke="#c0c0c0" stroke-width="0.8"/>
 <path d="M915.2 164.8 H926.4 M918 162 V174.8 M915.2 167.5 H919 M915.2 170.5 H919" stroke="#bdbdbd" stroke-width="0.8"/>
 <path d="M919.8 169 H922 L923 167.5 H926 L927 169 H928.5 V175 H919.8 Z" fill="#444"/>
 <circle cx="924.2" cy="172" r="1.7" fill="#bbb" stroke="#333" stroke-width="0.5"/>
 <!-- datum display -->
 <g stroke="#8a6a3a" stroke-width="1.2" fill="none">
  <path d="M937.5 162.3 L940.3 165 M940.3 162.3 L937.5 165"/>
  <path d="M945 162 L943.8 164.3 M942.5 167 L941.2 169.5 M940 172 L938.8 174.3"/>
  <path d="M944.5 171.8 H951.5 M949.5 170.3 L951.5 171.8 L949.5 173.3 M945 167.5 V175"/>
 </g>
 <path d="M950.8 176.5 L953.5 174 V176.5 Z" fill="#555"/>
 <!-- spin -->
 <path d="M968.3 161.8 H972.5 V169 H968.3" fill="none" stroke="#777" stroke-width="1"/>
 <path d="M970 163.5 V167.5" stroke="#bbb" stroke-width="1"/>
 <path d="M962.3 166 Q962.3 163.5 965 163.5" fill="none" stroke="#333" stroke-width="1.2"/>
 <path d="M964.5 161.8 L967 163.5 L964.5 165.2 Z" fill="#333"/>
 <path d="M959.5 168 L961.5 166.5 H966 L968 168 V171 H959.5 Z" fill="#bfe6f6" stroke="#3a9ac8" stroke-width="0.8"/>
 <path d="M962 170.5 L963.5 169 H968.5 L969.8 170.5 V175.5 H962 Z" fill="#6fc0e0" stroke="#3a9ac8" stroke-width="0.8"/>
 <!-- shaded -->
 <path d="M981.5 166 L985 162 H995 L991.5 166 Z" fill="#c8ecf8" stroke="#9cc8d8" stroke-width="0.8"/>
 <path d="M991.5 166 L995 162 V171.5 L991.5 175.5 Z" fill="#dde3e6" stroke="#aab4b8" stroke-width="0.8"/>
 <rect x="981.5" y="166" width="10" height="9.5" fill="#f2f2f2" stroke="#b8bcbe" stroke-width="0.8"/>
 <rect x="982" y="166.5" width="9" height="5.5" fill="#bfe6f6"/>
 <!-- hidden -->
 <path d="M1004 165 L1008 161.8 H1017.2 V171.2 L1013.5 175.5 H1004 Z" fill="#d4eef8" stroke="#5aaed8" stroke-width="1"/>
 <path d="M1004 165 H1013.5 V175.5 M1013.5 165 L1017.2 161.8" fill="none" stroke="#5aaed8" stroke-width="1"/>
 <path d="M1005.5 173.5 L1011 168 M1007.5 175 L1012 170.5" stroke="#8ccbe6" stroke-width="0.8"/>
 <!-- annotation display -->
 <path d="M1027 162 V170 M1038.5 162 V173 M1027.5 164.5 H1038" stroke="#333" stroke-width="1"/>
 <path d="M1027.5 164.5 L1029.5 163 V166 Z M1038 164.5 L1036 163 V166 Z" fill="#333"/>
 <path d="M1030.5 169.8 H1034.8 M1032.7 166.5 V169.8" stroke="#2a8ec8" stroke-width="1.2"/>
 <circle cx="1027.8" cy="173" r="1.2" fill="#eee" stroke="#999" stroke-width="0.6"/>
 <ellipse cx="1036" cy="173.5" rx="3.4" ry="2" fill="#444"/>
 <circle cx="1036" cy="173.5" r="0.9" fill="#999"/>
 <path d="M1039.5 176.5 L1042.2 174 V176.5 Z" fill="#555"/>
 <!-- view display -->
 <rect x="1048.5" y="162.5" width="11" height="11" fill="#fff" stroke="#999"/>
 <rect x="1050.5" y="164.5" width="8" height="6" fill="#4aa8e0"/>
 <ellipse cx="1057.5" cy="174" rx="3.3" ry="2.1" fill="#444"/>
 <path d="M1063 176 L1064.5 174.5 V176Z" fill="#444"/>
 <!-- selected eye -->
 <rect x="1071.5" y="162.5" width="8" height="5" fill="#f8f0d8" stroke="#999" stroke-width="0.8"/>
 <path d="M1079.5 165 H1082.5 V169 M1081 168 L1082.5 170 L1084 168" fill="none" stroke="#555" stroke-width="0.9"/>
 <ellipse cx="1080" cy="173.5" rx="3.3" ry="2.1" fill="#444"/>
 <!-- share -->
 <path d="M1096 164 L1099.5 168.5 L1105 168.5 M1099.5 168.5 L1096 173" stroke="#777" stroke-width="1" fill="none"/>
 <circle cx="1096" cy="163.5" r="2.4" fill="#7cc060"/><circle cx="1105" cy="168.5" r="2.4" fill="#e06060"/><circle cx="1096" cy="173.5" r="2.4" fill="#3a8ac0"/>
</svg>
<div class="a" style="left:3px;top:148px;width:1277px;height:1px;background:#b7c1c1"></div>
</body></html>
